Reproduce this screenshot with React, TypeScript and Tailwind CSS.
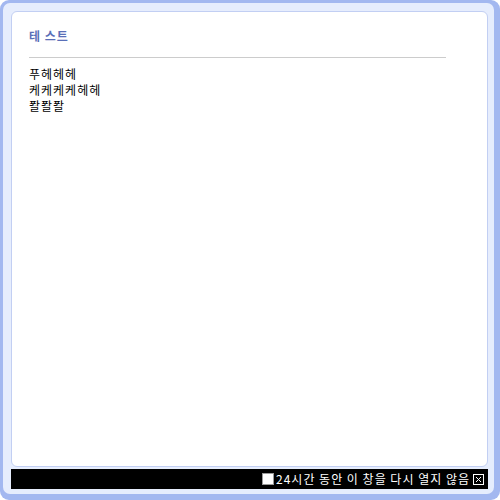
const lines = ["푸헤헤헤", "케케케케헤헤", "퐐퐐퐐"];

const CloseBox = () => (
  <svg width="11" height="11" viewBox="0 0 11 11" className="block">
    <rect x="0.5" y="0.5" width="10" height="10" fill="none" stroke="#fff" />
    <path d="M3 3 L8 8 M8 3 L3 8" stroke="#fff" strokeWidth="1" />
  </svg>
);

const App = () => {
  return (
    <div
      className="w-[500px] h-[500px] bg-white"
      style={{ fontFamily: '"Noto Sans CJK KR", "Noto Sans", sans-serif' }}
    >
      <div className="w-full h-full bg-[#a3b8f0] rounded-[9px] pl-[3px] pt-[3px] pr-[6px] pb-[6px]">
        <div className="w-full h-full bg-[#e6edfd] rounded-[7px] pl-[8px] pt-[8px] pr-[6px] pb-[5px] flex flex-col">
          <div className="flex-1 bg-white border border-[#c2cff3] rounded-[6px] pl-[17px] pt-[16px]">
            <h3 className="text-[12px] leading-[16px] font-bold text-[#5a6fb8] tracking-[1px]">
              테 스트
            </h3>
            <div className="mt-[13px] w-[417px] h-px bg-[#cccccc]" />
            <div className="mt-[8px] text-[12px] leading-[16px] text-black tracking-[1px]">
              {lines.map((l) => (
                <p key={l}>{l}</p>
              ))}
            </div>
          </div>
          <div className="mt-[2px] h-[20px] bg-black flex items-center justify-end pr-[4px]">
            <span className="w-[12px] h-[12px] bg-white border border-[#999] mr-[2px]" />
            <span className="text-white text-[12px] leading-[16px] tracking-[1px]">
              24시간 동안 이 창을 다시 열지 않음
            </span>
            <span className="ml-[3px]">
              <CloseBox />
            </span>
          </div>
        </div>
      </div>
    </div>
  );
};

export default App;
